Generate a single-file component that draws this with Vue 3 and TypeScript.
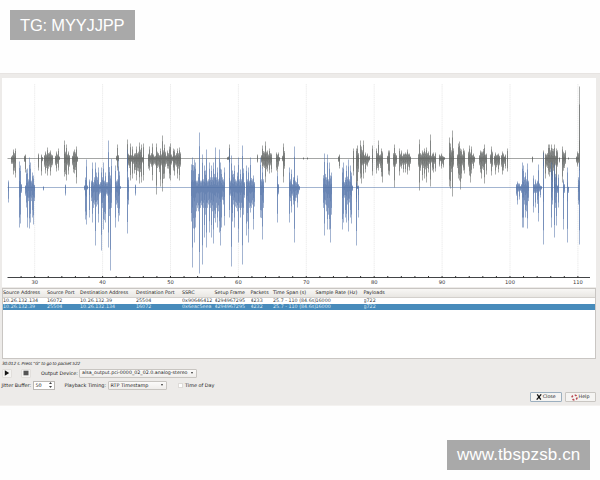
<script setup lang="ts">
interface Spike { x: number; up: number; down: number }

const parse = (source: string): Spike[] =>
  source.trim().split(/\s+/).map((item) => {
    const [x, range] = item.split(':')
    const [up, down] = range.split('/')
    return { x: Number(x), up: Number(up), down: Number(down) }
  })

const grayStream = parse(`
11:3/8 12:5/8 13:9/16 14:8/18 15:10/19 24:4/5 25:4/14 38:5/12 41:4/17 42:2/4 44:5/12 45:7/15 46:6/14 47:11/17 48:8/15
49:9/12 50:8/17 51:6/13 52:5/10 55:4/10 56:7/13 57:6/8 58:10/12 59:3/2 64:18/18 65:10/23 66:14/22 67:6/10 68:7/16 69:5/12
72:4/10 73:7/14 74:9/15 75:9/17 76:12/25 77:3/5 116:4/3 117:14/12 118:5/4 127:19/13 128:7/10 129:5/14 130:15/22 131:5/5
132:12/20 133:4/8 134:5/15 135:8/17 136:12/22 137:8/18 138:10/19 139:16/25 140:13/20 141:14/24 142:2/6 143:15/22
148:7/15 149:12/12 150:5/8 151:8/12 152:15/22 153:6/10 154:3/8 155:4/10 156:15/36 157:10/14 158:8/12 159:5/20
160:10/28 161:6/10 162:23/33 163:12/30 164:14/20 165:10/12 166:4/8 167:8/10 168:8/15 169:12/20 170:15/22 171:6/9
172:3/4 173:10/12 174:9/17 175:5/10 176:8/12 177:10/20 178:8/15 179:11/22 180:9/12 227:2/2 228:3/2 229:14/4 257:4/4
261:5/6 262:13/10 263:11/12 264:10/14 265:17/24 266:10/16 267:8/13 268:6/10 269:10/15 270:8/10 271:5/14
276:6/12 277:4/14 278:6/8 279:2/4 282:4/4 283:15/24 284:11/15 303:1/1 307:1/1 338:3/5 339:4/10 353:10/17
356:10/40 357:13/30 358:8/20 360:18/20 361:12/25 362:12/10 363:18/20 364:5/8 365:6/14 366:4/10 367:5/8 368:3/6 369:4/3
372:13/17 376:10/15 377:8/14 378:18/12 379:5/8 380:6/14 381:10/18 382:7/24 387:4/8 388:8/16 389:8/17 393:8/12 394:14/29
395:8/12 396:5/8 399:10/17 400:7/12 401:8/10 402:4/9 403:5/14 404:7/9 405:6/14 406:7/8 407:9/16 408:7/12 409:5/12 410:3/8
418:7/12 419:19/32 420:8/18 421:6/10 422:8/22 423:9/14 424:10/20 425:9/16 426:11/24 427:8/14 428:7/14 429:5/8 430:24/28
431:4/6 432:5/12 433:6/14 434:4/8 435:6/13 439:4/8 440:4/4 441:5/10 442:4/8 443:2/9 444:2/2 449:21/28 450:15/30 451:12/20
452:28/38 453:15/12 457:6/14 458:15/20 459:17/22 460:10/31 461:9/20 462:6/10 463:10/12 464:8/15 468:10/12 469:13/17
470:6/24 471:12/15 472:5/8 473:5/10 474:3/6 479:5/10 480:8/14 481:7/20 482:10/15 483:14/17 484:14/25 485:6/8 486:5/16
490:6/8 491:12/17 492:10/12 494:4/10 495:6/16 496:5/13 497:6/10 498:5/14 499:4/10 501:5/12 502:7/16 503:5/12 504:3/8
505:4/10 507:10/13 532:2/4 543:8/10 545:5/20 546:6/12 547:8/14 548:14/16 549:14/18 550:12/20 551:14/22 552:10/24
553:14/18 554:14/30 555:4/10 556:10/28 557:12/12 559:1/4 562:12/24 563:10/18 564:8/14 565:12/8 568:1/1
576:3/6 577:7/8 578:8/7 579:72/12`)

const blueStream = parse(`
8:7/15 19:26/40 20:22/36 21:5/8 25:3/12 26:18/20 27:19/40 28:12/20 29:30/41 30:25/35 31:10/20 32:15/30 33:12/37 34:4/20
43:1/3 65:3/8 84:3/4 85:10/32 86:28/37 87:3/3 89:8/30 91:10/20 92:25/35 93:8/30 94:15/25 95:25/58 96:22/28 97:15/25
98:20/35 99:5/10 100:8/8 101:20/63 102:15/30 103:25/42 104:10/48 105:15/35 106:8/10 107:8/12 108:47/60 109:30/42
110:12/83 111:42/30 115:22/40 116:10/25 117:12/30 118:28/34 119:16/28 120:2/2 127:38/46 128:15/25 135:3/8
191:34/50 192:30/80 193:33/60 194:28/55 195:25/40 196:10/35 197:10/30 198:20/35 199:55/86 200:10/30 201:10/26 202:33/77
203:12/30 204:22/50 205:25/40 206:38/60 207:10/30 208:12/25 209:25/45 210:15/30 211:22/50 212:15/35 213:25/56 214:20/45
215:40/35 216:15/30 217:20/40 218:12/35 219:38/45 220:25/58 221:18/40 222:15/18 223:12/25 224:20/38 229:38/30 230:10/12
231:32/79 232:25/50 233:20/25 234:22/40 235:12/28 236:10/30 237:22/35 238:30/55 239:12/30 240:18/30 241:12/30 242:42/77
243:28/40 244:8/15 246:22/48 247:12/50 248:20/55 249:10/30 250:30/25 251:14/30 252:12/25 253:12/42 254:8/28
260:30/30 261:12/45 262:20/52 263:12/30 277:15/35 278:5/10 289:20/35 290:12/20 291:18/25 292:5/12 293:15/25
294:41/55 295:10/20 296:8/15 297:12/20 298:5/10 299:2/4 323:18/30 324:34/48 325:20/25 326:15/35 327:33/42
328:12/40 329:25/42 330:12/55 331:22/40 342:20/42 343:25/35 344:8/15 345:10/30 346:22/35 347:16/25 348:28/44
349:12/22 350:22/30 351:15/36 352:3/5 356:5/58 357:2/2 358:2/30 516:5/12 517:6/17 518:6/6 519:4/12 520:2/5
521:5/8 522:25/40 523:22/40 524:15/25 525:15/30 526:12/35 527:24/41 528:10/20 533:12/25 534:5/8 535:8/20 536:6/8
537:10/24 538:23/34 539:6/6 540:2/10 541:2/3 543:35/57 551:25/40 552:25/25 554:23/50 555:20/30 556:12/38 557:3/8
558:13/20 563:8/42 564:5/8 567:20/55 568:1/8 578:15/25 579:25/57`)

const streams = [
  { name: 'forward', base: 158.5, spikes: grayStream },
  { name: 'reverse', base: 187.5, spikes: blueStream },
]

// A spike stands out when it reaches further than the mean of its neighbours.
const prominence = (spikes: Spike[], i: number): number => {
  const s = spikes[i]
  const near = [spikes[i - 1], spikes[i + 1]].filter((n) => n && Math.abs(n.x - s.x) === 1)
  if (!near.length) return 1
  const mean = near.reduce((sum, n) => sum + n.up + n.down, 0) / near.length
  return s.up + s.down >= mean ? 1 : 0.68
}

const outline = (spikes: Spike[], base: number, scale: number): string =>
  spikes.map((s, i) => {
    const k = scale * prominence(spikes, i)
    return `M${s.x + 0.5} ${base - s.up * k}V${base + s.down * k}`
  }).join('')

const majors = [30, 40, 50, 60, 70, 80, 90, 100, 110].map((label, i) => ({ label, x: 34.7 + i * 67.9 }))
const minorPath = Array.from({ length: 42 }, (_, i) => 21.1 + i * 13.58)
  .map((x) => `M${x} 276V278`).join('')

const headers = ['Source Address', 'Source Port', 'Destination Address', 'Destination Port', 'SSRC', 'Setup Frame', 'Packets', 'Time Span (s)', 'Sample Rate (Hz)', 'Payloads']
const rows = [
  ['10.26.132.134', '16072', '10.26.132.39', '25504', '0x90646412', '4294967295', '4233', '25.7 - 110 (84.6s)', '16000', 'g722'],
  ['10.26.132.39', '25504', '10.26.132.134', '16072', '0x6eac5eea', '4294967295', '4232', '25.7 - 110 (84.6s)', '16000', 'g722'],
]
</script>

<template>
  <main class="page">
    <div class="tag tag-top">TG: MYYJJPP</div>
    <section class="window">
      <div class="plot">
        <svg viewBox="2 78 594 209" width="594" height="209">
          <path v-for="m in majors" :key="m.label" class="grid" :d="`M${m.x} 84V276`" />
          <g v-for="s in streams" :key="s.name" :class="s.name">
            <path class="baseline" :d="`M7.5 ${s.base}H579`" />
            <path class="tips" :d="outline(s.spikes, s.base, 1)" />
            <path class="body" :d="outline(s.spikes, s.base, 0.75)" />
            <path class="core" :d="outline(s.spikes, s.base, 0.25)" />
          </g>
          <path class="axis" d="M7.5 277.5H590" />
          <path class="ticks" :d="minorPath" />
          <text v-for="m in majors" :key="m.label" class="label" :x="m.x" y="283.7">{{ m.label }}</text>
        </svg>
      </div>
      <div class="table">
        <div class="line head"><span v-for="h in headers" :key="h">{{ h }}</span></div>
        <div v-for="(row, i) in rows" :key="i" class="line" :class="{ selected: i === 1 }">
          <span v-for="(cell, c) in row" :key="c">{{ cell }}</span>
        </div>
      </div>
      <div class="hint">30.012 s. Press "G" to go to packet 522</div>
      <div class="controls">
        <div class="btn icon"><svg width="6" height="6" viewBox="0 0 6 6"><path d="M.8 .2L5.2 3L.8 5.8Z" /></svg></div>
        <div class="btn icon stop"><svg width="6" height="6" viewBox="0 0 6 6"><path d="M.5 .7H5.5V5.3H.5Z" /></svg></div>
        <span class="device-label">Output Device:</span>
        <div class="select device"><span>alsa_output.pci-0000_02_02.0.analog-stereo</span><i class="arrow"></i></div>
      </div>
      <div class="controls second">
        <span class="jitter-label">Jitter Buffer:</span>
        <div class="spin"><span>50</span><svg width="5" height="8" viewBox="0 0 5 8"><path d="M1 3L2.5 1L4 3ZM1 5L2.5 7L4 5Z" /></svg></div>
        <span class="timing-label">Playback Timing:</span>
        <div class="select timing"><span>RTP Timestamp</span><i class="arrow"></i></div>
        <i class="check"></i><span class="time-label">Time of Day</span>
      </div>
      <div class="actions">
        <div class="btn close"><svg width="6" height="6" viewBox="0 0 6 6"><path d="M1.2 .4L4.8 5.6M5.2 .4L.7 5.6" /></svg><span>Close</span></div>
        <div class="btn help"><svg width="7" height="7" viewBox="0 0 7 7"><circle cx="3.5" cy="3.5" r="2.5" /></svg><span>Help</span></div>
      </div>
    </section>
    <div class="tag tag-bottom">www.tbspzsb.cn</div>
  </main>
</template>

<style>
body { margin: 0; background: #fefefe; }
</style>

<style scoped>
* { box-sizing: border-box; }
.page { width: 600px; height: 480px; overflow: hidden; display: flex; flex-direction: column; background: #fefefe; }
.tag { height: 30px; padding: 0 10px; background: #a9a9a9; color: #fff; font: 17px/30px "Liberation Sans", sans-serif; white-space: nowrap; }
.tag-top { width: 125px; margin: 10px 0 33px 10px; font-size: 16.5px; letter-spacing: -.18px; line-height: 30px; }
.tag-bottom { width: 143px; margin: 34px 10px 0 auto; letter-spacing: .1px; line-height: 30px; }
.window { height: 333px; padding: 4px 4px 0 2px; display: flex; flex-direction: column; background: #edebe9; border-top: 1px solid #e7e4e2; border-bottom: 1px solid #f4f2f0; font: 5px/6px "DejaVu Sans", sans-serif; color: #222; white-space: nowrap; }
.plot { height: 209px; flex-shrink: 0; background: #fff; overflow: hidden; }
.plot svg { display: block; }
path { fill: none; }
.grid { stroke: #e9e9e9; stroke-width: .8; stroke-dasharray: 1.5 .6; }
.forward { stroke: #5c5f5d; }
.reverse { stroke: #4e70a7; }
.baseline { stroke-width: .8; opacity: .7; }
.tips { opacity: .52; }
.body { opacity: .52; }
.core { opacity: .35; }
.reverse .baseline { opacity: .65; }
.axis { stroke: #424446; stroke-width: 1; }
.ticks { stroke: #333; stroke-width: 1; }
.label { font: 5.2px "DejaVu Sans", sans-serif; text-anchor: middle; fill: #383838; }
.table { height: 71px; margin-top: 1px; background: #fff; border: solid #c9c6c3; border-width: 1px .5px; overflow: hidden; flex-shrink: 0; }
.line { height: 6px; display: grid; grid-template-columns: 44px 33px 56px 46px 32.5px 36px 22.5px 42.5px 48px 1fr; font-size: 4.8px; line-height: 6px; color: #3c3c3c; }
.line span { overflow: hidden; }
.head { height: 8.5px; line-height: 8.5px; color: #222; background: linear-gradient(#f8f7f5, #e9e7e3); border-bottom: .5px solid #d3d0cc; }
.head span { overflow: visible; }
.selected { background: #478bbb; color: #dceaf5; height: 6.5px; }
.hint { height: 9px; line-height: 9px; font-style: italic; font-size: 4.3px; letter-spacing: -.18px; }
.controls { height: 10px; display: flex; align-items: center; font-size: 4.9px; }
.btn { display: flex; align-items: center; justify-content: center; background: #f5f4f2; border: .5px solid #d2cfcb; border-radius: 1px; }
.icon { width: 10px; height: 9px; border-color: #e2dfdc; }
.icon path { fill: #151515; }
.stop { margin-left: 9px; }
.stop path { fill: #555; }
.device-label { width: 38px; margin-left: 10px; }
.select { height: 9px; padding: 0 2px; display: flex; align-items: center; justify-content: space-between; background: linear-gradient(#fbfaf9, #efedeb); border: .5px solid #c8c5c1; border-radius: 1px; }
.device { width: 118px; font-size: 4.75px; }
.timing { width: 59px; }
.arrow { border: 1.5px solid transparent; border-top: 2px solid #333; border-bottom: 0; margin-right: 1px; }
.second { margin-top: 2px; }
.jitter-label { width: 31px; margin-left: -.5px; }
.spin { width: 22px; height: 9px; display: flex; align-items: center; justify-content: space-between; padding: 0 1px 0 2px; background: #fff; border: .5px solid #bbb8b4; }
.spin path { fill: #444; }
.timing-label { width: 43px; margin-left: 10px; }
.check { width: 5px; height: 5px; margin-left: 11px; background: #fff; border: .5px solid #dedbd8; }
.time-label { margin-left: 2.5px; }
.actions { display: flex; justify-content: flex-end; gap: 2.5px; margin-top: 2px; font-size: 4.8px; }
.actions .btn { height: 10px; gap: .5px; border: 1px solid #c9c6c2; }
.actions .close { width: 32px; border-color: #9cafbf; }
.actions .help { width: 31.5px; }
.close path { stroke: #111; stroke-width: 1.3; }
.help circle { fill: none; stroke: #b94b54; stroke-width: 1.7; stroke-dasharray: 2 1.9; }
</style>
